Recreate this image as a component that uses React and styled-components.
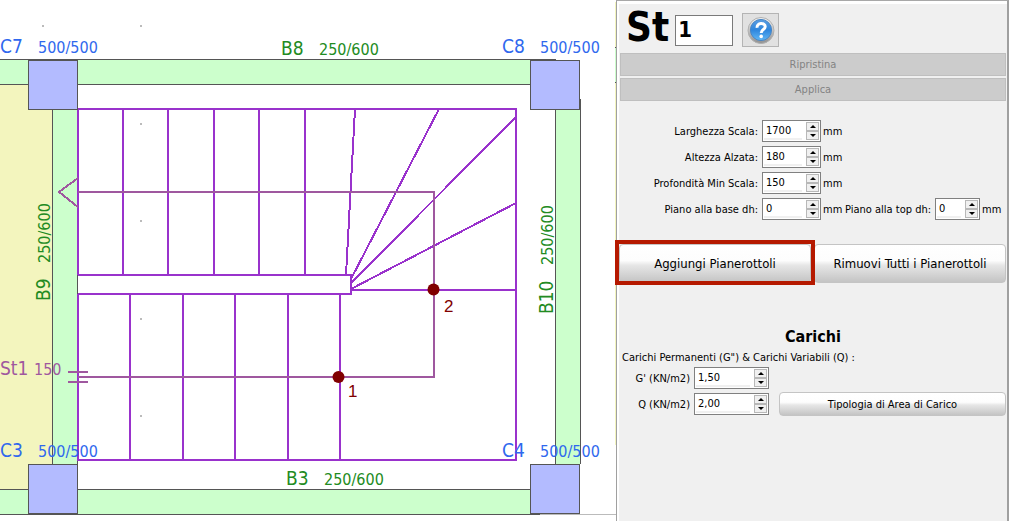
import React from "react";
import styled, { createGlobalStyle } from "styled-components";

const columns = [
  { name: "C7", x: 28, y: 60, labelX: 0, labelY: 53 },
  { name: "C8", x: 530, y: 60, labelX: 502, labelY: 53 },
  { name: "C3", x: 28, y: 464, labelX: 0, labelY: 457 },
  { name: "C4", x: 530, y: 464, labelX: 502, labelY: 457 },
];

const gridPoints = [
  [42, 25],
  [140, 25],
  [140, 123],
  [140, 220],
  [140, 318],
  [140, 415],
];

const upperSteps = [123, 168, 214, 259, 305];
const lowerSteps = [130, 183, 235, 288, 340];

function Plan() {
  return (
    <Drawing viewBox="0 0 616 521" preserveAspectRatio="xMinYMin meet">
      <g shapeRendering="crispEdges">
        <rect x="0" y="85" width="52" height="404" fill="#f3f5be" />
        <rect x="0" y="60" width="555" height="24" fill="#ccffcc" />
        <rect x="0" y="490" width="555" height="24" fill="#ccffcc" />
        <rect x="53" y="85" width="24" height="404" fill="#ccffcc" />
        <rect x="556" y="85" width="24" height="404" fill="#ccffcc" />
        <rect x="52" y="85" width="1" height="404" fill="#555" />
        <rect x="77" y="85" width="1" height="404" fill="#555" />
        <rect x="555" y="85" width="1" height="404" fill="#555" />
        <rect x="580" y="99" width="1" height="365" fill="#555" />
        <rect x="0" y="59" width="556" height="1" fill="#555" />
        <rect x="0" y="84" width="555" height="1" fill="#555" />
        <rect x="0" y="489" width="555" height="1" fill="#555" />
        <rect x="0" y="514" width="540" height="1" fill="#555" />
        <rect x="540" y="514" width="76" height="1" fill="#bbb" />
        <rect x="615" y="2" width="1" height="443" fill="#f3f5be" />
        <rect x="615" y="47" width="1" height="35" fill="#ccffcc" />
        <rect x="615" y="47" width="1" height="1" fill="#555" />
        <rect x="615" y="82" width="1" height="1" fill="#555" />
        {gridPoints.map(([x, y]) => (
          <rect key={x + "-" + y} x={x} y={y} width="2" height="2" fill="#bbb" />
        ))}
      </g>

      <g stroke="#9932cc" strokeWidth="2" fill="none" shapeRendering="crispEdges">
        <path d="M78 275V109H516V460H78V294" />
        <path d="M78 275H351V294H78" />
        {upperSteps.map((x) => (
          <path key={x} d={`M${x} 109V275`} />
        ))}
        {lowerSteps.map((x) => (
          <path key={x} d={`M${x} 294V460`} />
        ))}
        <path d="M355 109L346 275" />
        <path d="M439 109L351 279" />
        <path d="M516 117L351 283" />
        <path d="M516 203L351 289" />
        <path d="M351 290H516" />
      </g>

      <g stroke="#9f589f" strokeWidth="2" fill="none" shapeRendering="crispEdges">
        <path d="M78 192H434V377H78" />
        <path d="M78 178L59 192L78 207" />
        <path d="M68 372H88M68 382H88" />
      </g>

      <g fill="#800000">
        <circle cx="433.5" cy="289.5" r="6" />
        <circle cx="338.5" cy="377" r="6" />
        <PointLabel x="444" y="312">2</PointLabel>
        <PointLabel x="348" y="397">1</PointLabel>
      </g>

      {columns.map((c) => (
        <g key={c.name} fill="#2f68ee">
          <rect
            x={c.x}
            y={c.y}
            width="50"
            height="50"
            fill="#555"
            shapeRendering="crispEdges"
          />
          <rect
            x={c.x + 1}
            y={c.y + 1}
            width="48"
            height="48"
            fill="#b3bbff"
            shapeRendering="crispEdges"
          />
          <Name x={c.labelX} y={c.labelY}>
            {c.name}
          </Name>
          <Size x={c.labelX + 38} y={c.labelY}>
            500/500
          </Size>
        </g>
      ))}

      <g fill="#228b22">
        <Name x="281" y="55">B8</Name>
        <Size x="319" y="55">250/600</Size>
        <Name x="286" y="485">B3</Name>
        <Size x="324" y="485">250/600</Size>
        <g transform="translate(50 301) rotate(-90)">
          <Name>B9</Name>
          <Size x="38">250/600</Size>
        </g>
        <g transform="translate(553 314) rotate(-90)">
          <Name>B10</Name>
          <Size x="49">250/600</Size>
        </g>
      </g>

      <g fill="#9f589f">
        <Name x="0" y="375">St1</Name>
        <Size x="34" y="375">150</Size>
      </g>
    </Drawing>
  );
}

function HelpIcon() {
  return (
    <svg width="28" height="28" viewBox="0 0 28 28" aria-hidden="true">
      <defs>
        <linearGradient id="rim" x1="0" y1="0" x2="0" y2="1">
          <stop offset="0" stopColor="#f4f4f4" />
          <stop offset="1" stopColor="#8f8f8f" />
        </linearGradient>
        <linearGradient id="ball" x1="0" y1="0" x2="0" y2="1">
          <stop offset="0" stopColor="#5b9ee2" />
          <stop offset="0.5" stopColor="#2f86dd" />
          <stop offset="1" stopColor="#62b8f6" />
        </linearGradient>
      </defs>
      <circle cx="14" cy="14.5" r="13" fill="url(#rim)" stroke="#b0b0b0" />
      <circle cx="14" cy="14" r="10.6" fill="url(#ball)" stroke="#4a86c4" />
      <path
        d="M10.2 11.8C9.2 6.4 18.4 6.2 18.2 10.8C18.1 13.8 14.2 13.4 14.2 17"
        fill="none"
        stroke="#fff"
        strokeWidth="3"
      />
      <circle cx="14.2" cy="20.4" r="1.8" fill="#fff" />
    </svg>
  );
}

function Spinner({ id, value, size }) {
  return (
    <SpinBox $size={size}>
      <SpinInput id={id} type="text" defaultValue={value} />
      <SpinButtons>
        <SpinButton type="button" aria-label="+">
          <svg width="6" height="3" viewBox="0 0 6 3">
            <path d="M0 3L3 0L6 3Z" />
          </svg>
        </SpinButton>
        <SpinButton type="button" aria-label="-">
          <svg width="6" height="3" viewBox="0 0 6 3">
            <path d="M0 0L3 3L6 0Z" />
          </svg>
        </SpinButton>
      </SpinButtons>
    </SpinBox>
  );
}

function App() {
  return (
    <Page>
      <GlobalStyle />
      <Plan />
      <Panel>
        <Header>
          <Title htmlFor="number">St</Title>
          <NumberInput id="number" type="text" defaultValue="1" />
          <HelpButton type="button" aria-label="?">
            <HelpIcon />
          </HelpButton>
        </Header>

        <Actions>
          <FlatButton type="button" disabled>
            Ripristina
          </FlatButton>
          <FlatButton type="button" disabled>
            Applica
          </FlatButton>
        </Actions>

        <Fields>
          <Row>
            <Label htmlFor="width">Larghezza Scala:</Label>
            <Spinner id="width" value="1700" />
            <Unit>mm</Unit>
          </Row>
          <Row>
            <Label htmlFor="riser">Altezza Alzata:</Label>
            <Spinner id="riser" value="180" />
            <Unit>mm</Unit>
          </Row>
          <Row>
            <Label htmlFor="depth">Profondità Min Scala:</Label>
            <Spinner id="depth" value="150" />
            <Unit>mm</Unit>
          </Row>
          <Row>
            <Label htmlFor="base">Piano alla base dh:</Label>
            <Spinner id="base" value="0" />
            <Unit>mm</Unit>
            <SideLabel htmlFor="top">Piano alla top dh:</SideLabel>
            <Spinner id="top" value="0" size="small" />
            <Unit>mm</Unit>
          </Row>
        </Fields>

        <Landings>
          <Marked>
            <GlossButton type="button">Aggiungi Pianerottoli</GlossButton>
          </Marked>
          <GlossButton type="button">Rimuovi Tutti i Pianerottoli</GlossButton>
        </Landings>

        <Heading>Carichi</Heading>
        <Note>Carichi Permanenti (G") &amp; Carichi Variabili (Q) :</Note>
        <Loads>
          <Row>
            <LoadLabel htmlFor="g">G' (KN/m2)</LoadLabel>
            <Spinner id="g" value="1,50" size="large" />
          </Row>
          <Row>
            <LoadLabel htmlFor="q">Q (KN/m2)</LoadLabel>
            <Spinner id="q" value="2,00" size="large" />
            <AreaButton type="button">Tipologia di Area di Carico</AreaButton>
          </Row>
        </Loads>
      </Panel>
    </Page>
  );
}

const GlobalStyle = createGlobalStyle`
  * {
    box-sizing: border-box;
  }
  body {
    margin: 0;
    background: #fff;
  }
  body, button, input {
    font-family: "DejaVu Sans Condensed", "DejaVu Sans", sans-serif;
    color: #000;
  }
`;

const Page = styled.div`
  display: grid;
  grid-template-columns: minmax(0, 616fr) minmax(380px, 393fr);
  min-height: 100vh;
`;

const Drawing = styled.svg`
  display: block;
  width: 100%;
`;

const Name = styled.text`
  font-size: 19px;
`;

const Size = styled.text`
  font-size: 16px;
`;

const PointLabel = styled.text`
  font-family: "Liberation Sans", sans-serif;
  font-size: 17px;
`;

const Panel = styled.div`
  background: #f0f0f0;
  border-top: 1px solid #a8a8a8;
  border-left: 1px solid #a0a0a0;
  border-right: 2px solid #a0a0a0;
  box-shadow: inset 2px 3px 0 #fff;
  padding: 12px 1px 0 3px;
`;

const Header = styled.div`
  display: flex;
  align-items: center;
  height: 34px;
  padding-left: 6px;
`;

const Title = styled.label`
  align-self: flex-start;
  font-size: 40px;
  line-height: 28px;
  font-weight: bold;
`;

const NumberInput = styled.input`
  width: 58px;
  height: 31px;
  margin: 0 9px 0 6px;
  padding: 0 2px 2px;
  border: 1px solid #7a7a7a;
  background: #fff;
  font-size: 22px;
  font-weight: bold;
`;

const HelpButton = styled.button`
  display: flex;
  align-items: center;
  justify-content: center;
  width: 37px;
  height: 34px;
  padding: 0;
  border: 1px solid #b4b4b4;
  background: #e1e1e1;
`;

const Actions = styled.div`
  display: grid;
  gap: 2px;
  margin-top: 6px;
`;

const FlatButton = styled.button`
  height: 23px;
  padding: 0;
  border: 1px solid #bfbfbf;
  background: #ccc;
  color: #838383;
  font-size: 11px;
`;

const Fields = styled.div`
  display: grid;
  gap: 4px;
  margin-top: 19px;
`;

const Row = styled.div`
  display: flex;
  align-items: center;
  height: 22px;
  font-size: 11px;
`;

const Label = styled.label`
  width: 138px;
  margin-right: 4px;
  text-align: right;
  white-space: nowrap;
`;

const SideLabel = styled.label`
  margin: 0 4px 0 2px;
  white-space: nowrap;
`;

const Unit = styled.span`
  width: 20px;
  margin-left: 2px;
`;

const spinWidths = { small: "45px", medium: "59px", large: "75px" };

const SpinBox = styled.div`
  display: flex;
  flex-shrink: 0;
  width: ${(props) => spinWidths[props.$size || "medium"]};
  height: 22px;
  padding: 1px;
  border: 1px solid #808080;
  background: #fff;
`;

const SpinInput = styled.input`
  flex: 1;
  min-width: 0;
  margin-right: 4px;
  padding: 0 0 0 2px;
  border: 0;
  border-bottom: 2px solid #f0f0f0;
  background: #fff;
  font-size: 11px;
`;

const SpinButtons = styled.div`
  display: grid;
  width: 13px;
`;

const SpinButton = styled.button`
  display: flex;
  align-items: center;
  justify-content: center;
  padding: 0;
  border: 1px solid #b8b8b8;
  background: #f0f0f0;
`;

const Landings = styled.div`
  display: grid;
  grid-template-columns: 1fr 1fr;
  gap: 3px;
  margin: 24px 0 0 -1px;
`;

const Marked = styled.div`
  display: grid;
  position: relative;

  &::after {
    content: "";
    position: absolute;
    inset: -4px -4px -2px;
    border: 4px solid #b51900;
    pointer-events: none;
    z-index: 1;
  }
`;

const GlossButton = styled.button`
  height: 39px;
  padding: 0;
  border: 1px solid #c4c4c4;
  border-radius: 4px;
  background: linear-gradient(#fff 0%, #fdfdfd 42%, #e6e6e6 55%, #c4c4c4 100%);
  font-size: 13px;
  white-space: nowrap;
`;

const Heading = styled.h2`
  margin: 44px 0 0;
  font-size: 16px;
  line-height: 20px;
  text-align: center;
`;

const Note = styled.p`
  margin: 4px 0 0 2px;
  font-size: 11px;
  line-height: 14px;
`;

const Loads = styled.div`
  display: grid;
  gap: 4px;
  margin-top: 2px;
`;

const LoadLabel = styled.label`
  width: 70px;
  margin-right: 4px;
  text-align: right;
`;

const AreaButton = styled(GlossButton)`
  flex: 1;
  height: 24px;
  margin-left: 10px;
  font-size: 11px;
`;

export default App;
